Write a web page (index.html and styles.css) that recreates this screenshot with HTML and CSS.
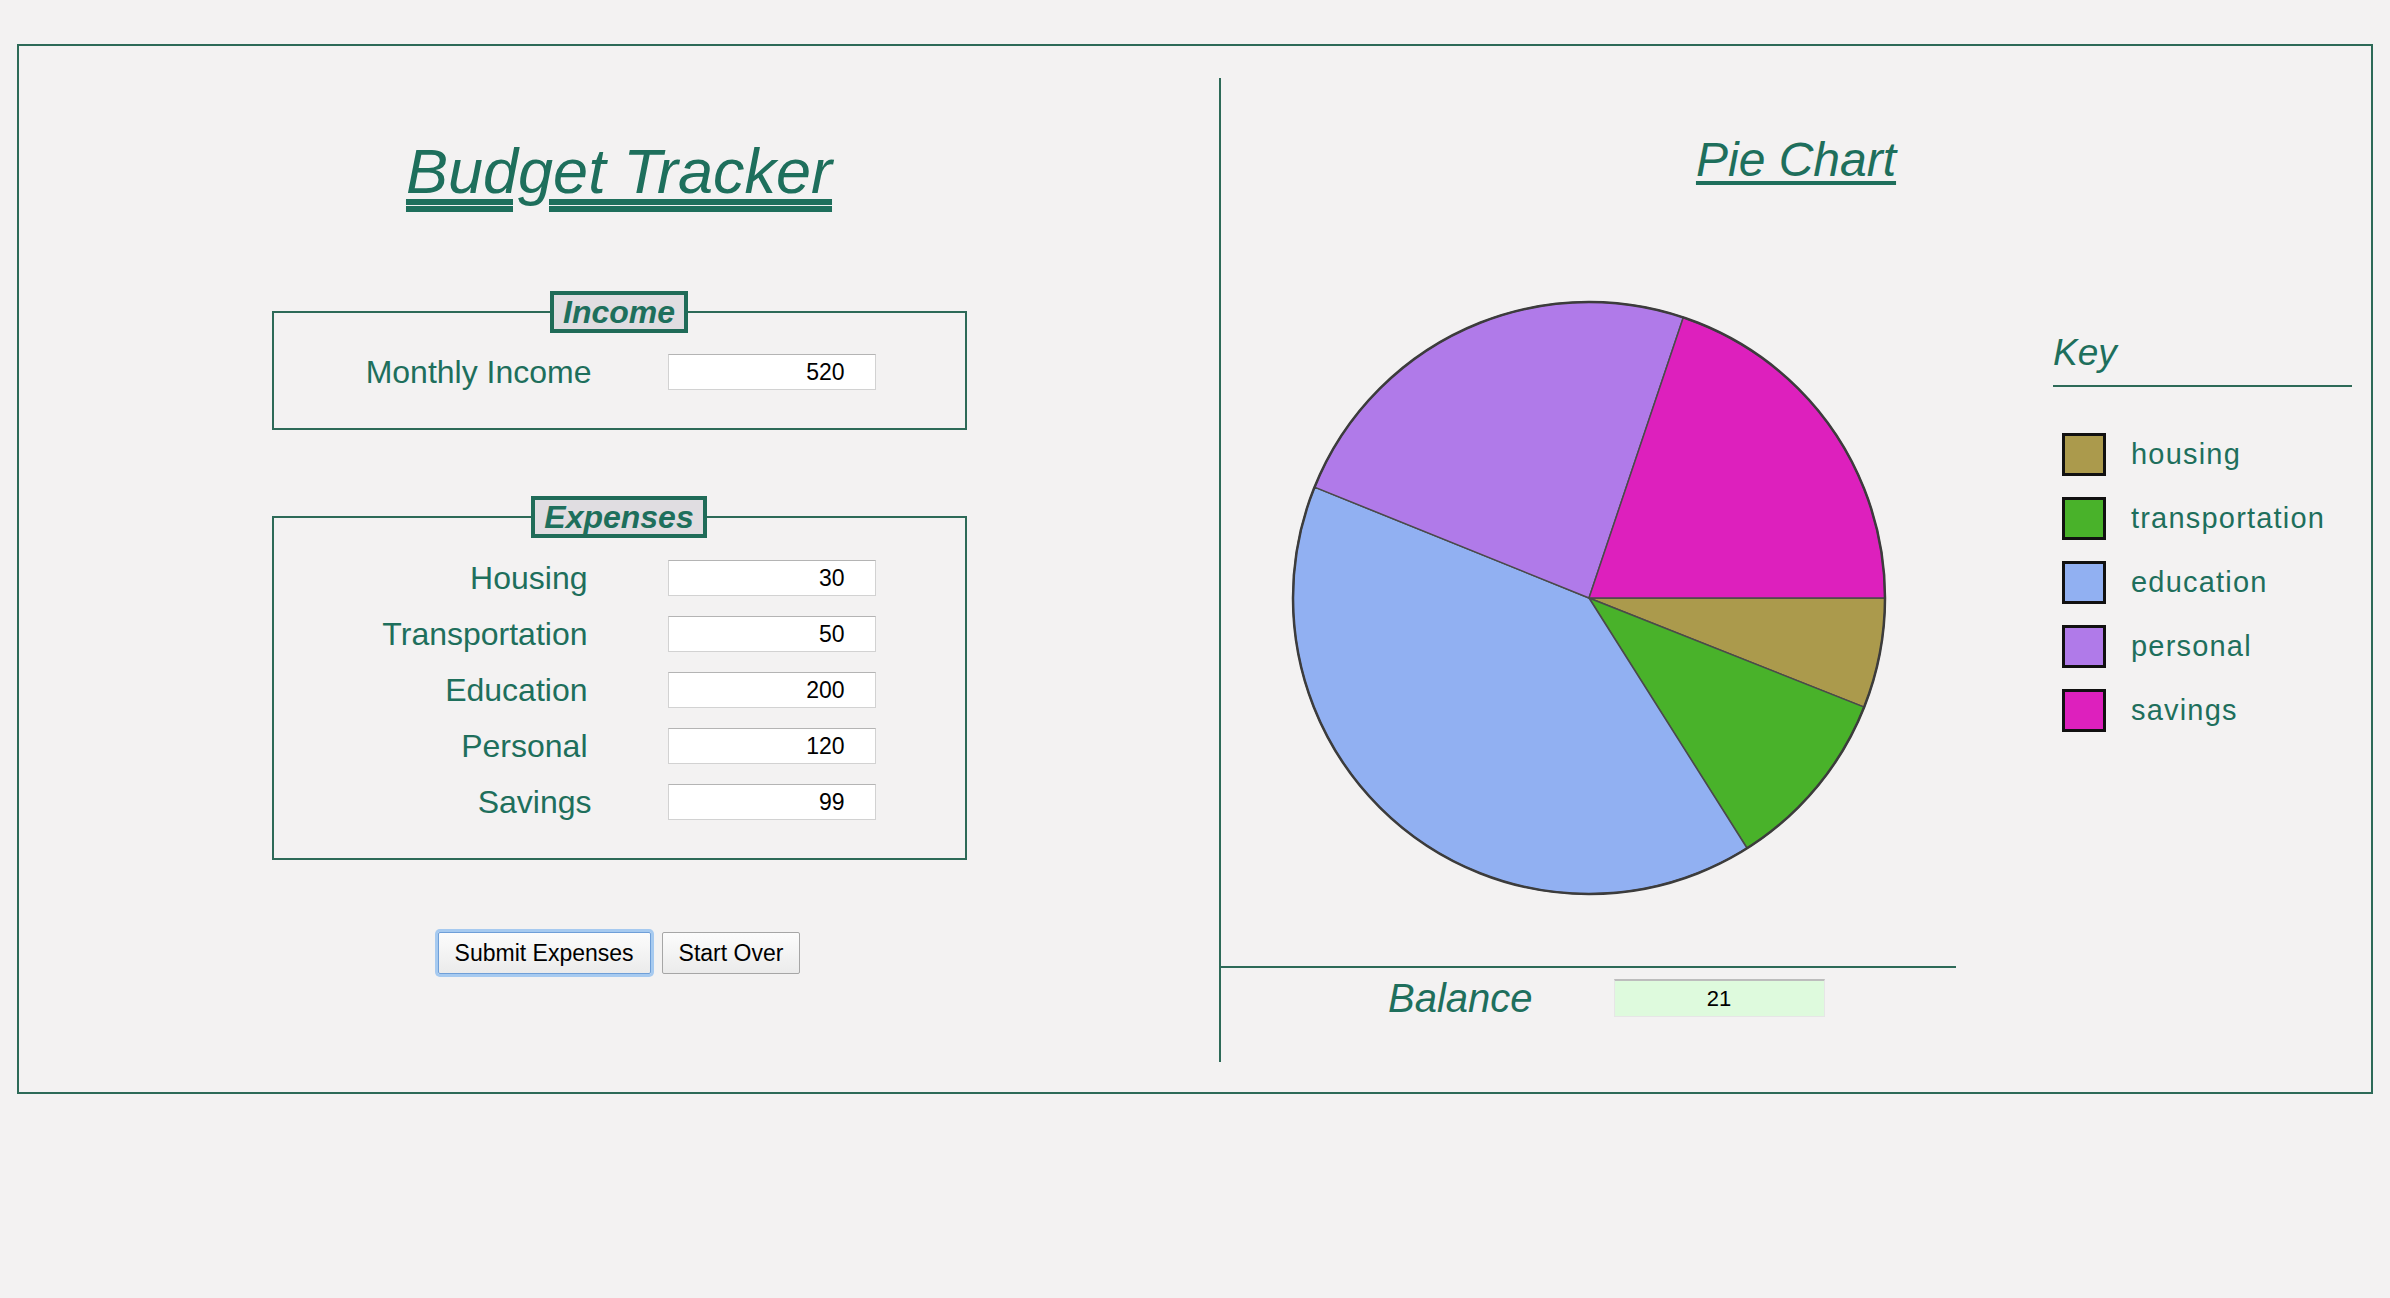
FILE: index.html
```html
<!DOCTYPE html>
<html lang="en">
<head>
<meta charset="utf-8">
<title>Budget Tracker</title>
<link rel="stylesheet" href="styles.css">
</head>
<body>
<div class="app">
  <section class="left">
    <h1 class="title">Budget Tracker</h1>

    <fieldset class="group">
      <legend class="group-legend">Income</legend>
      <div class="rows">
        <div class="row"><label class="lbl lbl-wide">Monthly Income</label><input class="num" value="520"></div>
      </div>
    </fieldset>

    <fieldset class="group group-exp">
      <legend class="group-legend">Expenses</legend>
      <div class="rows">
        <div class="row"><label class="lbl">Housing</label><input class="num" value="30"></div>
        <div class="row"><label class="lbl">Transportation</label><input class="num" value="50"></div>
        <div class="row"><label class="lbl">Education</label><input class="num" value="200"></div>
        <div class="row"><label class="lbl">Personal</label><input class="num" value="120"></div>
        <div class="row"><label class="lbl lbl-wide">Savings</label><input class="num" value="99"></div>
      </div>
    </fieldset>

    <div class="buttons">
      <button class="btn btn-focus">Submit Expenses</button>
      <button class="btn">Start Over</button>
    </div>
  </section>

  <section class="right">
    <h2 class="chart-title">Pie Chart</h2>
    <div class="chart-row">
      <div class="chart-col">
        <svg class="pie" width="600" height="600" viewBox="0 0 600 600">
          <g stroke="#4a4a4a" stroke-width="1.5" stroke-linejoin="round">
            <path fill="#ab9a4c" d="M300,300 L596,300 A296,296 0 0 1 575.13,409.16 Z"/>
            <path fill="#49b22a" d="M300,300 L575.13,409.16 A296,296 0 0 1 458.10,550.24 Z"/>
            <path fill="#91b0f2" d="M300,300 L458.10,550.24 A296,296 0 0 1 25.56,189.10 Z"/>
            <path fill="#b07ae9" d="M300,300 L25.56,189.10 A296,296 0 0 1 394.30,19.42 Z"/>
            <path fill="#dd20bd" d="M300,300 L394.30,19.42 A296,296 0 0 1 596,300 Z"/>
          </g>
          <circle cx="300" cy="300" r="296" fill="none" stroke="#3c3c3c" stroke-width="2.5"/>
        </svg>
        <div class="balance">
          <span class="balance-label">Balance</span>
          <input class="balance-input" value="21">
        </div>
      </div>
      <div class="key">
        <h3 class="key-title">Key</h3>
        <ul class="key-list">
          <li class="key-item"><span class="swatch sw-housing"></span>housing</li>
          <li class="key-item"><span class="swatch sw-transport"></span>transportation</li>
          <li class="key-item"><span class="swatch sw-education"></span>education</li>
          <li class="key-item"><span class="swatch sw-personal"></span>personal</li>
          <li class="key-item"><span class="swatch sw-savings"></span>savings</li>
        </ul>
      </div>
    </div>
  </section>
</div>
</body>
</html>
```
FILE: styles.css
```css
* { box-sizing: border-box; }

html, body {
  margin: 0;
  background: #f3f2f2;
}

body {
  padding: 44px 17px;
  font-family: "Liberation Sans", Arial, sans-serif;
  color: #1e6f5c;
}

.app {
  display: flex;
  height: 1050px;
  border: 2px solid #2d6a58;
}

/* ---------- left ---------- */
.left {
  width: 1200px;
  flex: none;
  display: flex;
  flex-direction: column;
  align-items: center;
}

.title {
  margin: 89px 0 0;
  font-size: 63px;
  line-height: 72px;
  font-style: italic;
  font-weight: normal;
  color: #1e6f5c;
  text-decoration: underline double;
  text-decoration-thickness: 6px;
  text-underline-offset: 6px;
}

.group {
  width: 695px;
  margin: 84px 0 0;
  padding: 0 0 38px;
  border: 2px solid #2d6a58;
  min-inline-size: 0;
}

.group-exp { margin-top: 66px; }

.group-legend {
  margin-inline: auto;
  padding: 0 9px;
  font-size: 32px;
  line-height: 34px;
  font-weight: bold;
  font-style: italic;
  color: #1e6f5c;
  background: #e0dde1;
  border: 4px solid #1f6b58;
}

.rows {
  display: flex;
  flex-direction: column;
  gap: 20px;
  padding-top: 21px;
}

.group-exp .rows { padding-top: 22px; }

.row {
  display: flex;
  align-items: center;
  height: 36px;
}

.lbl {
  width: 314px;
  text-align: right;
  font-size: 32px;
  line-height: 36px;
  color: #1e6f5c;
}

.lbl-wide { width: 318px; }

.num {
  width: 208px;
  height: 36px;
  margin-left: 80px;
  padding: 0 30px 0 8px;
  text-align: right;
  font-family: "Liberation Sans", Arial, sans-serif;
  font-size: 23px;
  color: #000;
  background: #fff;
  border: 1px solid #d2d2d2;
  border-top-color: #b4b4b4;
  outline: none;
}

.lbl-wide + .num { margin-left: 76px; }

.buttons {
  display: flex;
  gap: 11px;
  margin-top: 72px;
}

.btn {
  height: 42px;
  padding: 0 16px;
  font-family: "Liberation Sans", Arial, sans-serif;
  font-size: 23px;
  color: #000;
  background: linear-gradient(#fcfcfc, #ebebeb);
  border: 1px solid #a6a6a6;
  border-radius: 2px;
}

.btn-focus {
  border-color: #6f9fd8;
  box-shadow: 0 0 0 3px #a6caf0;
}

/* ---------- right ---------- */
.right {
  flex: 1;
  margin: 32px 0 30px;
  border-left: 2px solid #2d6a58;
  display: flex;
  flex-direction: column;
}

.chart-title {
  margin: 54px 0 0;
  text-align: center;
  font-size: 48px;
  line-height: 56px;
  font-style: italic;
  font-weight: normal;
  color: #1e6f5c;
  text-decoration: underline;
  text-decoration-thickness: 4px;
  text-underline-offset: 5px;
}

.chart-row {
  display: flex;
  align-items: flex-start;
}

.chart-col {
  width: 735px;
  flex: none;
  display: flex;
  flex-direction: column;
  align-items: center;
}

.pie {
  display: block;
  margin-top: 110px;
}

.balance {
  align-self: stretch;
  margin-top: 68px;
  border-top: 2px solid #2d6a58;
  padding: 7px 0 0 167px;
  display: flex;
  align-items: center;
}

.balance-label {
  font-size: 40px;
  line-height: 46px;
  font-style: italic;
  color: #1e6f5c;
}

.balance-input {
  width: 211px;
  height: 38px;
  margin-left: 81px;
  text-align: center;
  font-family: "Liberation Sans", Arial, sans-serif;
  font-size: 22px;
  color: #000;
  background: #defadd;
  border: 1px solid #e6e6e6;
  border-top: 2px solid #bdbdbd;
  outline: none;
}

.key {
  width: 299px;
  margin-left: 97px;
  margin-top: 143px;
}

.key-title {
  margin: 0;
  padding-bottom: 11px;
  border-bottom: 2px solid #2d6a58;
  font-size: 37px;
  line-height: 43px;
  font-style: italic;
  font-weight: normal;
  color: #1e6f5c;
}

.key-list {
  list-style: none;
  margin: 46px 0 0;
  padding: 0 0 0 9px;
  display: flex;
  flex-direction: column;
  gap: 21px;
}

.key-item {
  display: flex;
  align-items: center;
  height: 43px;
  font-size: 29px;
  letter-spacing: 1.2px;
  color: #1e6f5c;
}

.swatch {
  width: 44px;
  height: 43px;
  margin-right: 25px;
  border: 3px solid #111;
  flex: none;
}

.sw-housing { background: #ab9a4c; }
.sw-transport { background: #49b22a; }
.sw-education { background: #91b0f2; }
.sw-personal { background: #b07ae9; }
.sw-savings { background: #dd20bd; }
```
